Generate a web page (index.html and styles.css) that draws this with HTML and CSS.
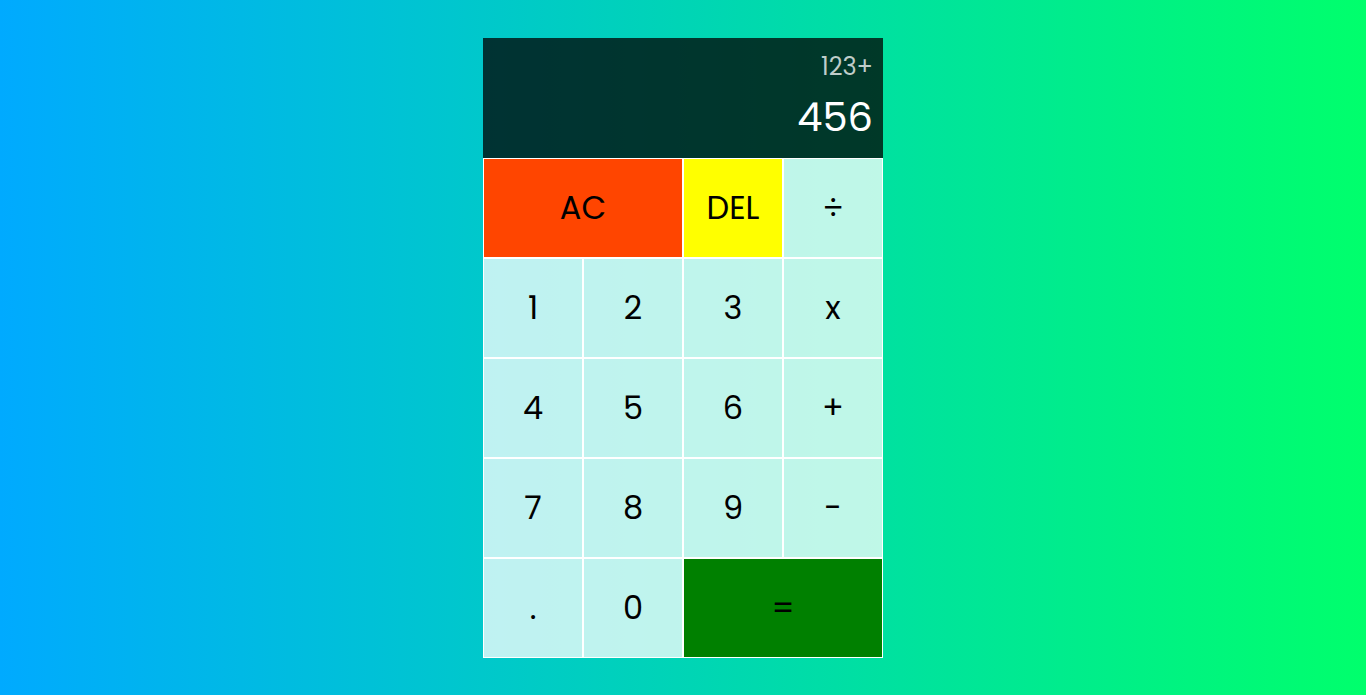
FILE: index.html
```html
<!DOCTYPE html>
<html lang="en">
<head>
<meta charset="utf-8">
<title>Calculator</title>
<link rel="stylesheet" href="styles.css">
</head>
<body>
<div class="calculator-grid">
  <div class="output">
    <div class="previous-operand">123+</div>
    <div class="current-operand">456</div>
  </div>
  <button class="span-two ac">AC</button>
  <button class="del">DEL</button>
  <button>÷</button>
  <button>1</button>
  <button>2</button>
  <button>3</button>
  <button>x</button>
  <button>4</button>
  <button>5</button>
  <button>6</button>
  <button>+</button>
  <button>7</button>
  <button>8</button>
  <button>9</button>
  <button>-</button>
  <button>.</button>
  <button>0</button>
  <button class="span-two equals">=</button>
</div>
</body>
</html>
```
FILE: styles.css
```css
*, *::before, *::after {
  box-sizing: border-box;
  font-family: "Poppins", "Inter", "Open Sans", sans-serif;
  font-weight: normal;
}

body {
  margin: 0;
  padding: 0;
  background: linear-gradient(to right, #00AAFF, #00FF6C);
}

.calculator-grid {
  display: grid;
  justify-content: center;
  align-content: center;
  min-height: 100vh;
  grid-template-columns: repeat(4, 100px);
  grid-template-rows: minmax(120px, auto) repeat(5, 100px);
}

.calculator-grid > button {
  cursor: pointer;
  font-size: 2rem;
  border: 1px solid white;
  outline: none;
  color: #000;
  background-color: rgba(255, 255, 255, .75);
  padding: 0;
}

.calculator-grid > button.span-two {
  grid-column: span 2;
}

.calculator-grid > button.ac {
  background-color: orangered;
}

.calculator-grid > button.del {
  background-color: yellow;
}

.calculator-grid > button.equals {
  background-color: green;
}

.output {
  grid-column: 1 / -1;
  background-color: rgba(0, 0, 0, .75);
  display: flex;
  align-items: flex-end;
  justify-content: space-around;
  flex-direction: column;
  padding: 10px;
  word-wrap: break-word;
  word-break: break-all;
}

.output .previous-operand {
  color: rgba(255, 255, 255, .75);
  font-size: 1.5rem;
  line-height: 36px;
}

.output .current-operand {
  color: white;
  font-size: 2.5rem;
  line-height: 60px;
}
```
